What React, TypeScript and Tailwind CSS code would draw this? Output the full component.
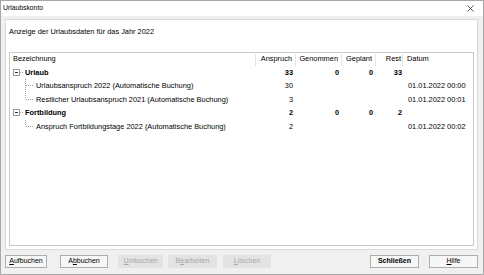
import React from 'react';

type Row = {
    level: 0 | 1;
    label: string;
    anspruch?: string;
    genommen?: string;
    geplant?: string;
    rest?: string;
    datum?: string;
    last?: boolean;
};

const rows: Row[] = [
    { level: 0, label: 'Urlaub', anspruch: '33', genommen: '0', geplant: '0', rest: '33' },
    { level: 1, label: 'Urlaubsanspruch 2022 (Automatische Buchung)', anspruch: '30', datum: '01.01.2022 00:00' },
    { level: 1, label: 'Restlicher Urlaubsanspruch 2021 (Automatische Buchung)', anspruch: '3', datum: '01.01.2022 00:01', last: true },
    { level: 0, label: 'Fortbildung', anspruch: '2', genommen: '0', geplant: '0', rest: '2' },
    { level: 1, label: 'Anspruch Fortbildungstage 2022 (Automatische Buchung)', anspruch: '2', datum: '01.01.2022 00:02', last: true },
];

const cols = 'grid grid-cols-[246px_40px_46px_34px_27px_1fr]';

function TreeGlyph({ row }: { row: Row }) {
    if (row.level === 0) {
        return (
            <svg width="14" height="13" viewBox="0 0 14 13" className="shrink-0">
                <rect x="2.5" y="3.5" width="6" height="6" fill="#fff" stroke="#9a9a9a" />
                <line x1="4" y1="6.5" x2="7" y2="6.5" stroke="#333" />
                <line x1="9" y1="6.5" x2="12" y2="6.5" stroke="#a0a0a0" strokeDasharray="1 1" />
            </svg>
        );
    }
    return (
        <svg width="25" height="13" viewBox="0 0 25 13" className="shrink-0">
            <line x1="14.5" y1="0" x2="14.5" y2={row.last ? 6.5 : 13} stroke="#a0a0a0" strokeDasharray="1 1" />
            <line x1="15" y1="6.5" x2="22" y2="6.5" stroke="#a0a0a0" strokeDasharray="1 1" />
        </svg>
    );
}

function Btn({ children, w, ml, disabled, bold }: { children: React.ReactNode; w: string; ml?: string; disabled?: boolean; bold?: boolean }) {
    return (
        <div
            className={`${w} ${ml ?? ''} h-[13px] flex items-center justify-center text-[7px] ${
                disabled
                    ? 'bg-[#e3e3e3] text-[#a8a8a8] border border-[#e3e3e3]'
                    : 'bg-[#f7f7f7] text-black border border-[#adadad]'
            } ${bold ? 'font-bold' : ''}`}
        >
            {children}
        </div>
    );
}

export default function App() {
    return (
        <div
            className="w-[484px] h-[275px] bg-[#f0f0f0] border border-[#a8a8a8] flex flex-col overflow-hidden text-black"
            style={{ fontFamily: '"Liberation Sans", Arial, sans-serif' }}
        >
            <div className="h-[15px] bg-white flex items-center justify-between pl-[2px] pr-[9px] shrink-0">
                <span className="text-[6.8px]">Urlaubskonto</span>
                <svg width="7" height="7" viewBox="0 0 7 7">
                    <path d="M0.5 0.5 L6.5 6.5 M6.5 0.5 L0.5 6.5" stroke="#444" strokeWidth="0.9" />
                </svg>
            </div>

            <div className="pl-[4px] pr-[5px] pt-[3px]">
                <div className="h-[231px] bg-white border border-[#d9d9d9] flex flex-col">
                    <div className="h-[32px] pl-[3px] pt-[6px] text-[7.4px]">
                        Anzeige der Urlaubsdaten für das Jahr 2022
                    </div>
                    <div className="mx-[3px] mb-[3px] flex-1 border border-[#c8c8c8] bg-white text-[7.4px]">
                        <div className={`${cols} h-[13.5px] -mt-[1px]`}>
                            <div className="flex items-center pl-[3px] border-r border-[#e5e5e5]">Bezeichnung</div>
                            <div className="flex items-center justify-end pr-[3px] border-r border-[#e5e5e5]">Anspruch</div>
                            <div className="flex items-center justify-end pr-[3px] border-r border-[#e5e5e5]">Genommen</div>
                            <div className="flex items-center justify-end pr-[3px] border-r border-[#e5e5e5]">Geplant</div>
                            <div className="flex items-center justify-end pr-[1px] border-r border-[#e5e5e5]">Rest</div>
                            <div className="flex items-center pl-[4px]">Datum</div>
                        </div>
                        {rows.map((row) => {
                            const b = row.level === 0 ? 'font-bold' : '';
                            return (
                                <div key={row.label} className={`${cols} h-[13.5px]`}>
                                    <div className="flex items-center pl-[1px]">
                                        <TreeGlyph row={row} />
                                        <span className={`${b} whitespace-nowrap`}>{row.label}</span>
                                    </div>
                                    <div className={`flex items-center justify-end pr-[3px] ${b}`}>{row.anspruch}</div>
                                    <div className={`flex items-center justify-end pr-[3px] ${b}`}>{row.genommen}</div>
                                    <div className={`flex items-center justify-end pr-[3px] ${b}`}>{row.geplant}</div>
                                    <div className={`flex items-center justify-end pr-[1px] ${b}`}>{row.rest}</div>
                                    <div className="flex items-center pl-[5px] whitespace-nowrap">{row.datum}</div>
                                </div>
                            );
                        })}
                    </div>
                </div>
            </div>

            <div className="flex items-center pl-[4px] pr-[5px] mt-[5px]">
                <Btn w="w-[42px]"><span><u>A</u>ufbuchen</span></Btn>
                <Btn w="w-[48px]" ml="ml-[13px]"><span>A<u>b</u>buchen</span></Btn>
                <Btn w="w-[45px]" ml="ml-[10px]" disabled><span><u>U</u>mbuchen</span></Btn>
                <Btn w="w-[49px]" ml="ml-[5px]" disabled><span>B<u>e</u>arbeiten</span></Btn>
                <Btn w="w-[48px]" ml="ml-[6px]" disabled><span><u>L</u>öschen</span></Btn>
                <div className="flex-1" />
                <Btn w="w-[49px]" bold>Schließen</Btn>
                <Btn w="w-[49px]" ml="ml-[10px]"><span><u>H</u>ilfe</span></Btn>
            </div>
        </div>
    );
}
